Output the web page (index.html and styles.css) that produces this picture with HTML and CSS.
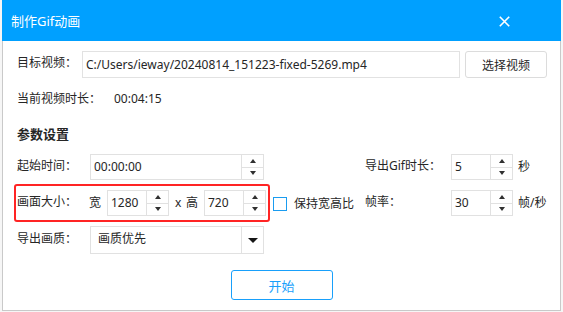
FILE: index.html
```html
<!DOCTYPE html>
<html lang="zh-CN">
<head>
<meta charset="utf-8">
<title>制作Gif动画</title>
<link rel="stylesheet" href="styles.css">
</head>
<body>
<div class="dialog">
  <div class="titlebar">
    <span class="title">制作Gif动画</span>
    <svg class="close" width="11" height="11" viewBox="0 0 11 11" aria-hidden="true">
      <path d="M0.8 0.8 L10.2 10.2 M10.2 0.8 L0.8 10.2" stroke="#ffffff" stroke-width="1.6" fill="none"/>
    </svg>
  </div>
  <div class="content">
    <div class="file-row">
      <span class="label file-label">目标视频：</span>
      <div class="field path">C:/Users/ieway/20240814_151223-fixed-5269.mp4</div>
      <button class="btn">选择视频</button>
    </div>
    <div class="duration-row">
      <span class="label duration-label">当前视频时长：</span>
      <span class="value">00:04:15</span>
    </div>
    <div class="section">参数设置</div>
    <div class="params">
      <span class="label">起始时间：</span>
      <div class="spin wide"><span class="spin-value">00:00:00</span><span class="spin-buttons"><span class="up"></span><span class="down"></span></span></div>
      <span></span>
      <span class="label">导出Gif时长：</span>
      <div class="spin small"><span class="spin-value">5</span><span class="spin-buttons"><span class="up"></span><span class="down"></span></span></div>
      <span class="unit">秒</span>

      <div class="size-frame">
        <span class="label size-label">画面大小：</span>
        <span class="dim">宽</span>
        <div class="spin small"><span class="spin-value">1280</span><span class="spin-buttons"><span class="up"></span><span class="down"></span></span></div>
        <span class="times">x</span>
        <span class="dim">高</span>
        <div class="spin small"><span class="spin-value">720</span><span class="spin-buttons"><span class="up"></span><span class="down"></span></span></div>
      </div>
      <label class="check"><span class="box"></span><span>保持宽高比</span></label>
      <span class="label">帧率：</span>
      <div class="spin small"><span class="spin-value">30</span><span class="spin-buttons"><span class="up"></span><span class="down"></span></span></div>
      <span class="unit">帧/秒</span>

      <span class="label">导出画质：</span>
      <div class="combo"><span class="combo-value">画质优先</span><span class="combo-arrow"><span class="tri"></span></span></div>
    </div>
    <div class="actions">
      <button class="btn-primary">开始</button>
    </div>
  </div>
</div>
</body>
</html>
```

FILE: styles.css
```css
html, body {
  margin: 0;
  padding: 0;
}
body {
  width: 563px;
  height: 312px;
  background: #f6f6f6;
  font-family: "Noto Sans", "Noto Sans CJK SC", sans-serif;
  font-size: 12px;
  color: #262626;
  overflow: hidden;
}
.dialog {
  margin-left: 2px;
  width: 559px;
  height: 311px;
  box-sizing: border-box;
  background: #ffffff;
  border: 1px solid #c9c9c9;
  border-top: none;
}
.titlebar {
  height: 41px;
  margin: 0 -1px;
  background: #00a0ff;
  display: flex;
  align-items: center;
  justify-content: space-between;
  padding: 0 51px 0 9px;
}
.title {
  color: #ffffff;
  font-size: 13px;
  font-family: "Noto Sans", "Noto Sans CJK SC", sans-serif;
  line-height: 18px;
}
.close {
  display: block;
  margin-top: 1px;
}
.content {
  padding: 10px 0 0 14px;
}
.label {
  white-space: nowrap;
  line-height: 18px;
}
.file-row {
  display: flex;
  align-items: center;
  height: 27px;
}
.file-label {
  width: 65px;
  margin-top: -3px;
}
.field {
  box-sizing: border-box;
  height: 27px;
  border: 1px solid #e2e2e2;
  line-height: 25px;
  padding-left: 3px;
  white-space: nowrap;
  overflow: hidden;
}
.path {
  width: 378px;
  font-size: 12px;
}
.btn {
  margin-left: 5px;
  width: 82px;
  height: 27px;
  box-sizing: border-box;
  border: 1px solid #dcdcdc;
  border-radius: 3px;
  background: #ffffff;
  font-family: "Noto Sans", "Noto Sans CJK SC", sans-serif;
  font-size: 12px;
  color: #262626;
  padding: 0;
}
.duration-row {
  margin-top: 12px;
  display: flex;
  height: 18px;
  line-height: 18px;
}
.duration-label {
  width: 97px;
}
.section {
  margin-top: 17px;
  font-size: 13px;
  font-weight: bold;
  line-height: 18px;
  height: 18px;
}
.params {
  margin-top: 11px;
  display: grid;
  grid-template-columns: 73px 173px 102px 86px 62px auto;
  grid-template-rows: 26px 38px 28px;
  row-gap: 4px;
  align-items: center;
}
.params > .label {
  margin-top: -2px;
}
.spin {
  box-sizing: border-box;
  height: 26px;
  display: flex;
  border: 1px solid #e1e1e1;
  background: #ffffff;
}
.spin.wide {
  width: 174px;
}
.spin.small {
  width: 62px;
}
.spin-value {
  flex: 1;
  padding-left: 3px;
  line-height: 24px;
  white-space: nowrap;
}
.spin-buttons {
  width: 21px;
  border-left: 1px solid #e1e1e1;
  display: flex;
  flex-direction: column;
}
.spin-buttons .up,
.spin-buttons .down {
  flex: 1;
  display: flex;
  align-items: center;
  justify-content: center;
}
.spin-buttons .up {
  border-bottom: 1px solid #e1e1e1;
}
.spin-buttons .up::after {
  content: "";
  border-left: 3.5px solid transparent;
  border-right: 3.5px solid transparent;
  border-bottom: 4px solid #303030;
}
.spin-buttons .down::after {
  content: "";
  border-left: 3.5px solid transparent;
  border-right: 3.5px solid transparent;
  border-top: 4px solid #303030;
}
.unit {
  padding-left: 5px;
  white-space: nowrap;
  margin-top: -2px;
}
.size-frame {
  grid-column: 1 / 3;
  margin: 0 -7px 0 -3px;
  height: 38px;
  box-sizing: border-box;
  border: 2px solid #ff2424;
  border-radius: 3px;
  display: flex;
  align-items: center;
  padding-left: 1px;
}
.size-label {
  width: 72px;
  margin-top: -2px;
}
.dim {
  width: 18px;
  margin-top: -2px;
}
.times {
  width: 11px;
  padding-left: 6px;
  margin-top: -2px;
}
.check {
  display: flex;
  align-items: center;
  padding-left: 10px;
  white-space: nowrap;
}
.check .box {
  width: 14px;
  height: 14px;
  box-sizing: border-box;
  border: 1px solid #1a9cf0;
  margin-right: 7px;
  margin-top: 1px;
}
.combo {
  box-sizing: border-box;
  width: 174px;
  height: 28px;
  border: 1px solid #e1e1e1;
  display: flex;
}
.combo-value {
  flex: 1;
  padding-left: 7px;
  line-height: 24px;
}
.combo-arrow {
  width: 21px;
  border-left: 1px solid #e1e1e1;
  display: flex;
  align-items: center;
  justify-content: center;
}
.combo-arrow .tri {
  border-left: 5.5px solid transparent;
  border-right: 5.5px solid transparent;
  border-top: 5px solid #151515;
}
.actions {
  margin-top: 16px;
  margin-left: -14px;
  display: flex;
  justify-content: center;
}
.btn-primary {
  width: 102px;
  height: 30px;
  box-sizing: border-box;
  border: 1.5px solid #18a0fb;
  border-radius: 3px;
  background: #ffffff;
  color: #18a0fb;
  font-family: "Noto Sans", "Noto Sans CJK SC", sans-serif;
  font-size: 13px;
  padding: 0;
}
```
